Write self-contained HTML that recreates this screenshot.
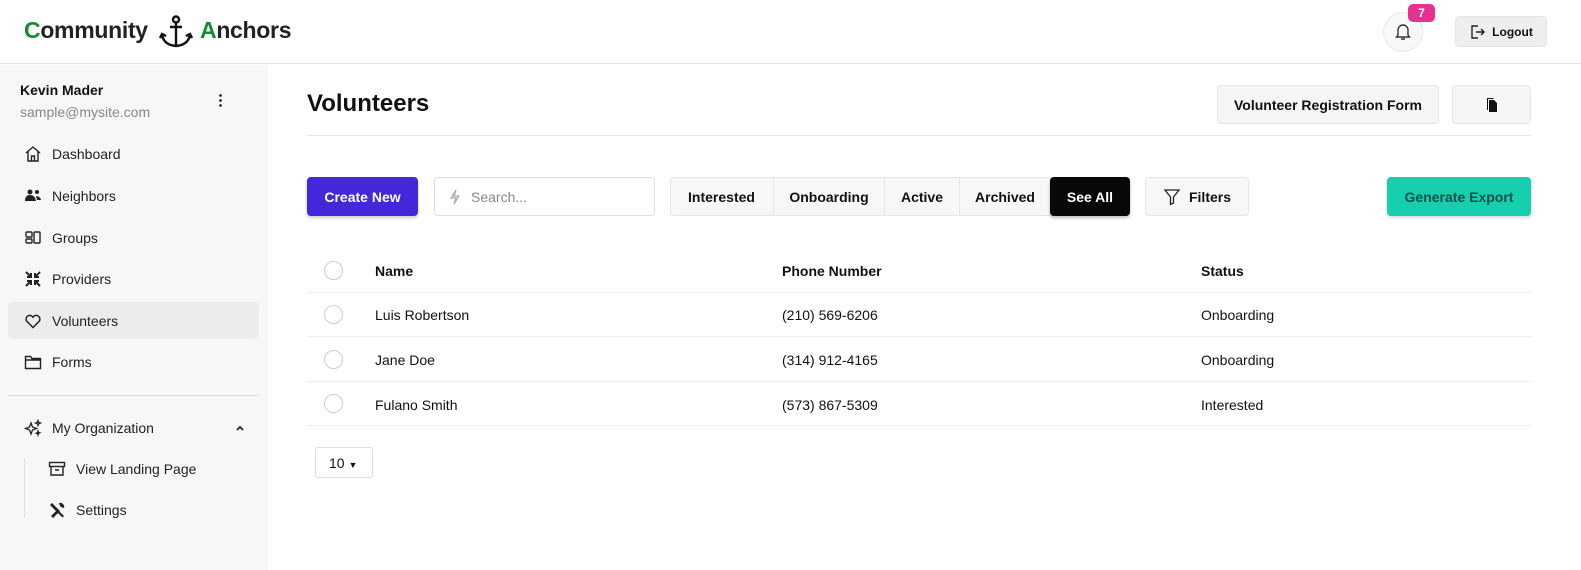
<!DOCTYPE html>
<html><head><meta charset="utf-8"><style>
*{box-sizing:border-box;margin:0;padding:0}
body{width:1581px;height:570px;overflow:hidden;font-family:"Liberation Sans",sans-serif;color:#111;background:#fff;position:relative;font-size:14px}
.a{position:absolute}
.hdr{left:0;top:0;width:1581px;height:64px;border-bottom:1px solid #e3e3e3;background:#fff}
.side{left:0;top:65px;width:268px;height:505px;background:#f7f7f7}
.nav{left:24px;font-size:14px;color:#222;display:flex;align-items:center;gap:10px}
.nav svg{width:18px;height:18px}
.btn{border:1px solid #e5e5e5;background:#f5f5f5;border-radius:4px;font-weight:bold;font-size:14px;display:flex;align-items:center;justify-content:center}
.tab{top:177px;height:39px;display:flex;align-items:center;justify-content:center;font-weight:bold;font-size:14px;border-right:1px solid #e5e5e5}
.row{left:307px;width:1224px;border-bottom:1px solid #eee}
.cb{width:19px;height:19px;border:1px solid #ccc;border-radius:50%;background:#fff}
.t{font-size:14px}
</style></head><body>
<div class="a hdr"></div>
<div class="a" style="left:24px;top:17px;font-size:23px;font-weight:bold;color:#222;letter-spacing:-0.3px"><span style="color:#178a3a">C</span>ommunity</div>
<svg class="a" style="left:158px;top:15px" width="36" height="34" viewBox="0 0 36 34" fill="none" stroke="#111" stroke-width="2.4"><circle cx="18" cy="4.5" r="3"/><path d="M18 7.5V31M12 12h12M4 20q2 10 14 11q12-1 14-11M2 23l2-4 4 2M34 23l-2-4-4 2"/></svg>
<div class="a" style="left:200px;top:17px;font-size:23px;font-weight:bold;color:#222;letter-spacing:-0.3px"><span style="color:#178a3a">A</span>nchors</div>
<div class="a" style="left:1383px;top:12px;width:40px;height:40px;border-radius:50%;border:1px solid #e8e8e8;background:#f8f8f8"></div>
<svg class="a" style="left:1395px;top:23px" width="16" height="18" viewBox="0 0 16 18" fill="none" stroke="#333" stroke-width="1.4"><path d="M3 12V7a5 5 0 0110 0v5l1.5 2h-13zM6 16h4"/></svg>
<div class="a" style="left:1408px;top:4px;width:27px;height:18px;border-radius:5px;background:#e8308f;color:#fff;font-size:12px;font-weight:bold;text-align:center;line-height:18px">7</div>
<div class="a btn" style="left:1455px;top:16px;width:92px;height:31px;background:#eee;font-size:12px;gap:7px"><svg width="16" height="16" viewBox="0 0 16 16" fill="none" stroke="#222" stroke-width="1.4"><path d="M9 2H3v12h6M7 8h8M12 5l3 3-3 3"/></svg>Logout</div>

<div class="a side"></div>
<div class="a" style="left:20px;top:82px;font-weight:bold;font-size:14px">Kevin Mader</div>
<div class="a" style="left:20px;top:104px;color:#888;font-size:14px">sample@mysite.com</div>
<div class="a" style="left:219px;top:93px;width:3px;height:15px;background:radial-gradient(circle,#222 1.2px,transparent 1.5px) 0 0/3px 5px"></div>
<div class="a" style="left:8px;top:302px;width:251px;height:37px;background:#ececec;border-radius:5px"></div>
<div class="a nav" style="top:145px"><svg viewBox="0 0 18 18" fill="none" stroke="#222" stroke-width="1.4"><path d="M2 8l7-6 7 6M4 6.5V16h10V6.5M7.5 16v-5h3v5"/></svg>Dashboard</div>
<div class="a nav" style="top:187px"><svg viewBox="0 0 18 18" fill="#222"><circle cx="6" cy="5" r="2.5"/><circle cx="13" cy="5" r="2"/><path d="M1 14q0-6 5-6t6 6zM12 9q4 0 5 4h-4z"/></svg>Neighbors</div>
<div class="a nav" style="top:229px"><svg viewBox="0 0 18 18" fill="none" stroke="#222" stroke-width="1.4"><rect x="2" y="3" width="6" height="5" rx="1"/><rect x="2" y="10" width="6" height="4" rx="1"/><rect x="10" y="3" width="6" height="11" rx="1"/></svg>Groups</div>
<div class="a nav" style="top:270px"><svg viewBox="0 0 18 18" fill="none" stroke="#222" stroke-width="2"><path d="M2 2l5 5M7 3v4H3M16 2l-5 5M11 3v4h4M2 16l5-5M7 15v-4H3M16 16l-5-5M11 15v-4h4"/></svg>Providers</div>
<div class="a nav" style="top:312px"><svg viewBox="0 0 18 18" fill="none" stroke="#222" stroke-width="1.5"><path d="M9 15.5L2.8 9.3a3.7 3.7 0 015.6-4.8L9 5.2l.6-.7a3.7 3.7 0 015.6 4.8z"/></svg>Volunteers</div>
<div class="a nav" style="top:353px"><svg viewBox="0 0 18 18" fill="none" stroke="#222" stroke-width="1.4"><path d="M1.5 3.5h5l1.5 2h8.5v10h-15zM1.5 7h15"/></svg>Forms</div>
<div class="a" style="left:8px;top:395px;width:251px;height:1px;background:#ddd"></div>
<div class="a nav" style="top:419px"><svg viewBox="0 0 18 18" fill="none" stroke="#222" stroke-width="1.3"><path d="M7 4l1.5 4 4 1.5-4 1.5L7 15l-1.5-4L1.5 9.5l4-1.5zM14 1.5l.7 1.8 1.8.7-1.8.7L14 6.5l-.7-1.8-1.8-.7 1.8-.7zM14 12l.5 1.3 1.3.5-1.3.5L14 16l-.5-1.3-1.3-.5 1.3-.5z"/></svg>My Organization</div>
<svg class="a" style="left:235px;top:424px" width="10" height="8" viewBox="0 0 10 8" fill="none" stroke="#222" stroke-width="1.8"><path d="M2 6l3-3 3 3"/></svg>
<div class="a" style="left:24px;top:458px;width:1px;height:60px;background:#ddd"></div>
<div class="a nav" style="left:48px;top:460px"><svg viewBox="0 0 18 18" fill="none" stroke="#222" stroke-width="1.4"><rect x="1.5" y="2.5" width="15" height="4"/><path d="M3 6.5V15h12V6.5M7 10h4"/></svg>View Landing Page</div>
<div class="a nav" style="left:48px;top:501px"><svg viewBox="0 0 18 18" fill="#222"><path d="M2 4l2-2 6 6-2 2zM11 10l5 5-1.5 1.5-5-5zM3 15l7-7 2 2-7 7zM11 2a4 4 0 015 5l-3-1-1-1z"/></svg>Settings</div>

<div class="a" style="left:307px;top:90px;font-size:24px;font-weight:bold">Volunteers</div>
<div class="a btn" style="left:1217px;top:85px;width:222px;height:39px">Volunteer Registration Form</div>
<div class="a btn" style="left:1452px;top:85px;width:79px;height:39px"><svg width="16" height="16" viewBox="0 0 16 16" fill="#111"><path d="M5 3h5l3 3v9H5z"/><path d="M3 1h6l1 1H4v11H3z"/></svg></div>
<div class="a" style="left:307px;top:135px;width:1224px;height:1px;background:#e5e5e5"></div>

<div class="a btn" style="left:307px;top:177px;width:111px;height:39px;background:#4327d8;border-color:#4327d8;color:#fff;box-shadow:0 2px 3px rgba(0,0,0,.2)">Create New</div>
<div class="a" style="left:434px;top:177px;width:221px;height:39px;border:1px solid #ddd;border-radius:4px"></div>
<svg class="a" style="left:448px;top:189px" width="14" height="16" viewBox="0 0 14 16" fill="none" stroke="#aaa" stroke-width="1.2"><path d="M8 1L3 9h5l-2 6 5-8H6z"/></svg>
<div class="a" style="left:471px;top:189px;color:#888">Search...</div>
<div class="a" style="left:670px;top:177px;width:460px;height:39px;border:1px solid #e5e5e5;border-radius:4px;background:#f7f7f7"></div>
<div class="a tab" style="left:670px;width:104px">Interested</div>
<div class="a tab" style="left:774px;width:111px">Onboarding</div>
<div class="a tab" style="left:885px;width:75px">Active</div>
<div class="a tab" style="left:960px;width:90px;border:0">Archived</div>
<div class="a tab" style="left:1050px;width:80px;background:#080808;color:#fff;border-radius:4px;border:0;box-shadow:0 2px 3px rgba(0,0,0,.25)">See All</div>
<div class="a btn" style="left:1145px;top:177px;width:104px;height:39px;background:#f7f7f7;gap:8px"><svg width="18" height="18" viewBox="0 0 18 18" fill="none" stroke="#222" stroke-width="1.3"><path d="M2 2h14l-5.5 7v6l-3 1.5V9z"/></svg>Filters</div>
<div class="a btn" style="left:1387px;top:177px;width:144px;height:39px;background:#16cfae;border-color:#16cfae;color:#0d4f49;box-shadow:0 2px 3px rgba(0,0,0,.15)">Generate Export</div>

<div class="a row" style="top:250px;height:43px"></div>
<div class="a cb" style="left:324px;top:261px"></div>
<div class="a t" style="left:375px;top:263px;font-weight:bold">Name</div>
<div class="a t" style="left:782px;top:263px;font-weight:bold">Phone Number</div>
<div class="a t" style="left:1201px;top:263px;font-weight:bold">Status</div>

<div class="a row" style="top:293px;height:44px"></div>
<div class="a cb" style="left:324px;top:305px"></div>
<div class="a t" style="left:375px;top:307px">Luis Robertson</div>
<div class="a t" style="left:782px;top:307px">(210) 569-6206</div>
<div class="a t" style="left:1201px;top:307px">Onboarding</div>

<div class="a row" style="top:337px;height:45px"></div>
<div class="a cb" style="left:324px;top:350px"></div>
<div class="a t" style="left:375px;top:352px">Jane Doe</div>
<div class="a t" style="left:782px;top:352px">(314) 912-4165</div>
<div class="a t" style="left:1201px;top:352px">Onboarding</div>

<div class="a row" style="top:382px;height:44px"></div>
<div class="a cb" style="left:324px;top:394px"></div>
<div class="a t" style="left:375px;top:397px">Fulano Smith</div>
<div class="a t" style="left:782px;top:397px">(573) 867-5309</div>
<div class="a t" style="left:1201px;top:397px">Interested</div>

<div class="a" style="left:315px;top:447px;width:58px;height:31px;border:1px solid #ddd;border-radius:3px;font-size:14px;padding:7px 0 0 13px">10 <span style="font-size:9px">▼</span></div>
</body></html>
